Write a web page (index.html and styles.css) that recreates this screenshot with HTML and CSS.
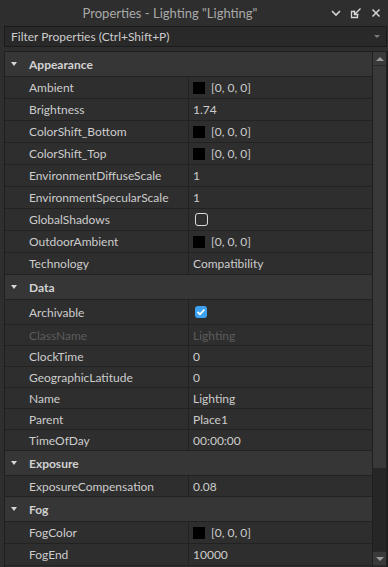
FILE: index.html
```html
<!DOCTYPE html>
<html lang="en">

<head>
    <meta charset="UTF-8">
    <meta name="viewport" content="width=device-width, initial-scale=1.0">
    <title>Properties</title>

    <link rel="stylesheet" href="styles.css">
</head>

<body>

    <div id="panel">

        <div class="titlebar">
            <span class="title">Properties - Lighting "Lighting"</span>
            <div class="winbtns">
                <svg width="10" height="7" viewBox="0 0 10 7"><polyline points="1,1 5,5 9,1" fill="none" stroke="#d6d6d6" stroke-width="1.6"/></svg>
                <svg width="12" height="12" viewBox="0 0 12 12"><path d="M4 4.5 H1.5 V10.5 H7.5 V8" fill="none" stroke="#d6d6d6" stroke-width="1.3"/><path d="M10.5 1.5 L5 7 M4.5 3.5 V7.5 H8.5" fill="none" stroke="#d6d6d6" stroke-width="1.4"/></svg>
                <svg width="10" height="10" viewBox="0 0 10 10"><path d="M1.5 1.5 L8.5 8.5 M8.5 1.5 L1.5 8.5" stroke="#d6d6d6" stroke-width="1.5"/></svg>
            </div>
        </div>

        <div class="filter">
            <span>Filter Properties (Ctrl+Shift+P)</span>
            <span class="drop"></span>
        </div>

        <div class="content">
            <div class="list">

                <div class="header first"><span class="caret"></span>Appearance</div>
                <div class="row"><div class="name">Ambient</div><div class="value"><span class="swatch"></span>[0, 0, 0]</div></div>
                <div class="row"><div class="name">Brightness</div><div class="value">1.74</div></div>
                <div class="row"><div class="name">ColorShift_Bottom</div><div class="value"><span class="swatch"></span>[0, 0, 0]</div></div>
                <div class="row"><div class="name">ColorShift_Top</div><div class="value"><span class="swatch"></span>[0, 0, 0]</div></div>
                <div class="row"><div class="name">EnvironmentDiffuseScale</div><div class="value">1</div></div>
                <div class="row"><div class="name">EnvironmentSpecularScale</div><div class="value">1</div></div>
                <div class="row"><div class="name">GlobalShadows</div><div class="value"><span class="check"></span></div></div>
                <div class="row"><div class="name">OutdoorAmbient</div><div class="value"><span class="swatch"></span>[0, 0, 0]</div></div>
                <div class="row"><div class="name">Technology</div><div class="value">Compatibility</div></div>

                <div class="header"><span class="caret"></span>Data</div>
                <div class="section-compact">
                    <div class="row tall"><div class="name">Archivable</div><div class="value"><span class="check on"><svg width="10" height="8" viewBox="0 0 10 8"><polyline points="1.5,4 4,6.3 8.5,1.5" fill="none" stroke="#fff" stroke-width="1.8"/></svg></span></div></div>
                    <div class="row disabled"><div class="name">ClassName</div><div class="value">Lighting</div></div>
                    <div class="row"><div class="name">ClockTime</div><div class="value">0</div></div>
                    <div class="row"><div class="name">GeographicLatitude</div><div class="value">0</div></div>
                    <div class="row"><div class="name">Name</div><div class="value">Lighting</div></div>
                    <div class="row"><div class="name">Parent</div><div class="value">Place1</div></div>
                    <div class="row"><div class="name">TimeOfDay</div><div class="value">00:00:00</div></div>
                </div>

                <div class="header"><span class="caret"></span>Exposure</div>
                <div class="section-compact">
                    <div class="row"><div class="name">ExposureCompensation</div><div class="value">0.08</div></div>
                </div>

                <div class="header"><span class="caret"></span>Fog</div>
                <div class="row"><div class="name">FogColor</div><div class="value"><span class="swatch"></span>[0, 0, 0]</div></div>
                <div class="row"><div class="name">FogEnd</div><div class="value">10000</div></div>

            </div>

            <div class="scrollbar">
                <div class="arrow up"></div>
                <div class="thumb"></div>
                <div class="track"></div>
                <div class="arrow down"></div>
            </div>
        </div>

    </div>

</body>

</html>
```

FILE: styles.css
```css
body {
    margin: 0;
    width: 388px;
    height: 567px;
    overflow: hidden;
    background-color: #2e2e2e;
    font-family: Lato, "Open Sans", sans-serif;
    font-size: 12px;
    color: #cccccc;
}

#panel {
    display: flex;
    flex-direction: column;
    height: 567px;
}

.titlebar {
    display: flex;
    align-items: center;
    height: 26px;
    flex-shrink: 0;
}

.title {
    flex: 1;
    text-align: center;
    padding-left: 14px;
    font-size: 13px;
    color: #a9a9a9;
}

.winbtns {
    display: flex;
    align-items: center;
    justify-content: flex-end;
    gap: 9px;
    padding-right: 7px;
    width: 55px;
}

.filter {
    display: flex;
    align-items: center;
    justify-content: space-between;
    height: 21px;
    box-sizing: border-box;
    margin-left: 4px;
    margin-right: 1px;
    padding: 0 6px 0 6px;
    background-color: #292929;
    border: 1px solid #1b1b1b;
    flex-shrink: 0;
}

.drop {
    width: 0;
    height: 0;
    border-left: 3px solid transparent;
    border-right: 3px solid transparent;
    border-top: 3px solid #7a7a7a;
}

.content {
    display: flex;
    margin-top: 4px;
    margin-left: 4px;
    flex: 1;
    min-height: 0;
    border-top: 1px solid #1f1f1f;
}

.list {
    flex: 1;
    border-left: 1px solid #1f1f1f;
    border-right: 1px solid #1f1f1f;
}

.header {
    display: flex;
    align-items: center;
    height: 25px;
    box-sizing: border-box;
    padding-left: 24px;
    position: relative;
    background-color: #363636;
    border-bottom: 1px solid #222222;
    font-weight: bold;
    color: #d2d2d2;
}

.caret {
    position: absolute;
    left: 6px;
    top: 10px;
    width: 0;
    height: 0;
    border-left: 3.5px solid transparent;
    border-right: 3.5px solid transparent;
    border-top: 4px solid #d6d6d6;
}

.row {
    display: flex;
    height: 22px;
    box-sizing: border-box;
    border-bottom: 1px solid #222222;
}

.section-compact .row {
    height: 21px;
}

.section-compact .row.tall {
    height: 25px;
}

.name {
    width: 159px;
    padding-left: 24px;
    border-right: 1px solid #222222;
    display: flex;
    align-items: center;
    white-space: nowrap;
}

.value {
    flex: 1;
    padding-left: 4px;
    display: flex;
    align-items: center;
    white-space: nowrap;
}

.disabled {
    color: #5c5c5c;
}

.swatch {
    width: 12px;
    height: 12px;
    background-color: #000;
    margin-right: 6px;
}

.check {
    width: 11px;
    height: 11px;
    margin-left: 2px;
    border: 1px solid #dcdcdc;
    border-radius: 3px;
}

.check.on {
    width: 12px;
    height: 12px;
    border: none;
    background-color: #3da2f4;
    display: flex;
    align-items: center;
    justify-content: center;
}

.scrollbar {
    width: 13px;
    display: flex;
    flex-direction: column;
    background-color: #292929;
    border-right: 2px solid #1f1f1f;
}

.arrow {
    height: 13px;
    background-color: #3a3a3a;
    display: flex;
    align-items: center;
    justify-content: center;
    flex-shrink: 0;
}

.arrow::after {
    content: "";
    width: 0;
    height: 0;
    border-left: 4px solid transparent;
    border-right: 4px solid transparent;
}

.arrow.up::after {
    border-bottom: 4px solid #9a9a9a;
}

.arrow.down::after {
    border-top: 4px solid #9a9a9a;
}

.arrow.down {
    margin-bottom: 2px;
}

.thumb {
    height: 402px;
    margin-top: 1px;
    background-color: #393939;
    flex-shrink: 0;
}

.track {
    flex: 1;
    background-color: #262626;
    margin-bottom: 1px;
}
```
